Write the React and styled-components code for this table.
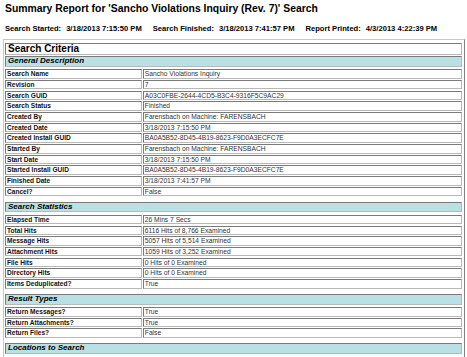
import React from 'react'
import styled, { createGlobalStyle } from 'styled-components'

const GlobalStyle = createGlobalStyle`
  html, body {
    margin: 0;
    padding: 0;
    background: #ffffff;
    overflow: hidden;
  }
  body {
    font-family: "Liberation Sans", Arial, sans-serif;
    color: #000;
  }
`

const Page = styled.div`
  width: 467px;
  height: 357px;
  overflow: hidden;
  padding: 2.5px 0 0 5px;
  box-sizing: border-box;
`

const Title = styled.h1`
  margin: 0;
  font-size: 10.4px;
  line-height: 12px;
  font-weight: bold;
  white-space: nowrap;
`

const Meta = styled.div`
  display: flex;
  gap: 11px;
  margin-top: 9px;
  font-size: 7.6px;
  line-height: 10px;
  font-weight: bold;
  white-space: nowrap;
`

const MetaItem = styled.span`
  display: flex;
  gap: 5px;
`

const Report = styled.div`
  margin: 5.5px 0 0 -2px;
  width: 462px;
  box-sizing: border-box;
  border: 1px solid;
  border-color: #c8c8c8 #808080 #808080 #c8c8c8;
  padding: 2.7px 2px 0 1px;
  display: flex;
  flex-direction: column;
`

const CriteriaHeader = styled.div`
  height: 12.3px;
  box-sizing: border-box;
  border: 1px solid;
  border-color: #7a7a7a #b8b8b8 #b8b8b8 #7a7a7a;
  padding-left: 2px;
  font-size: 10px;
  line-height: 10.3px;
  font-weight: bold;
  margin-bottom: 1px;
`

const GroupHeader = styled.div`
  height: 10.7px;
  box-sizing: border-box;
  border: 1px solid;
  border-color: #7a7a7a #b8b8b8 #b8b8b8 #7a7a7a;
  background: #b9e0e3;
  padding-left: 2px;
  font-size: 8px;
  line-height: 8.7px;
  font-weight: bold;
  font-style: italic;
  margin-top: ${p => (p.first ? '0' : '5.3px')};
  margin-bottom: 2.6px;
`

const Rows = styled.div`
  display: flex;
  flex-direction: column;
  gap: 1.2px;
`

const Row = styled.div`
  display: grid;
  grid-template-columns: 137px 1fr;
  gap: 1.3px;
  height: 9.5px;
`

const Cell = styled.div`
  box-sizing: border-box;
  border: 1px solid;
  border-color: #7a7a7a #b8b8b8 #b8b8b8 #7a7a7a;
  padding-left: ${p => (p.label ? '1px' : '0.5px')};
  font-size: ${p => (p.label ? '6.6px' : '6.7px')};
  font-weight: ${p => (p.label ? 'bold' : 'normal')};
  color: ${p => (p.label ? '#111' : '#333')};
  line-height: 7.5px;
  white-space: nowrap;
  overflow: hidden;
`

const sections = [
  {
    name: 'General Description',
    rows: [
      ['Search Name', 'Sancho Violations Inquiry'],
      ['Revision', '7'],
      ['Search GUID', 'A03C0FBE-2644-4CD5-B3C4-9316F5C9AC29'],
      ['Search Status', 'Finished'],
      ['Created By', 'Farensbach on Machine: FARENSBACH'],
      ['Created Date', '3/18/2013 7:15:50 PM'],
      ['Created Install GUID', 'BA0A5B52-8D45-4B19-8623-F9D0A3ECFC7E'],
      ['Started By', 'Farensbach on Machine: FARENSBACH'],
      ['Start Date', '3/18/2013 7:15:50 PM'],
      ['Started Install GUID', 'BA0A5B52-8D45-4B19-8623-F9D0A3ECFC7E'],
      ['Finished Date', '3/18/2013 7:41:57 PM'],
      ['Cancel?', 'False'],
    ],
  },
  {
    name: 'Search Statistics',
    rows: [
      ['Elapsed Time', '26 Mins 7 Secs'],
      ['Total Hits', '6116 Hits of 8,766 Examined'],
      ['Message Hits', '5057 Hits of 5,514 Examined'],
      ['Attachment Hits', '1059 Hits of 3,252 Examined'],
      ['File Hits', '0 Hits of 0 Examined'],
      ['Directory Hits', '0 Hits of 0 Examined'],
      ['Items Deduplicated?', 'True'],
    ],
  },
  {
    name: 'Result Types',
    rows: [
      ['Return Messages?', 'True'],
      ['Return Attachments?', 'True'],
      ['Return Files?', 'False'],
    ],
  },
  {
    name: 'Locations to Search',
    rows: [['', '']],
  },
]

const App = () => (
  <>
    <GlobalStyle />
    <Page>
      <Title>Summary Report for 'Sancho Violations Inquiry (Rev. 7)' Search</Title>
      <Meta>
        <MetaItem><span>Search Started:</span><span>3/18/2013 7:15:50 PM</span></MetaItem>
        <MetaItem><span>Search Finished:</span><span>3/18/2013 7:41:57 PM</span></MetaItem>
        <MetaItem><span>Report Printed:</span><span>4/3/2013 4:22:39 PM</span></MetaItem>
      </Meta>
      <Report>
        <CriteriaHeader>Search Criteria</CriteriaHeader>
        {sections.map((section, i) => (
          <React.Fragment key={section.name}>
            <GroupHeader first={i === 0}>{section.name}</GroupHeader>
            <Rows>
              {section.rows.map(([label, value], j) => (
                <Row key={j}>
                  <Cell label>{label}</Cell>
                  <Cell>{value}</Cell>
                </Row>
              ))}
            </Rows>
          </React.Fragment>
        ))}
      </Report>
    </Page>
  </>
)

export default App
